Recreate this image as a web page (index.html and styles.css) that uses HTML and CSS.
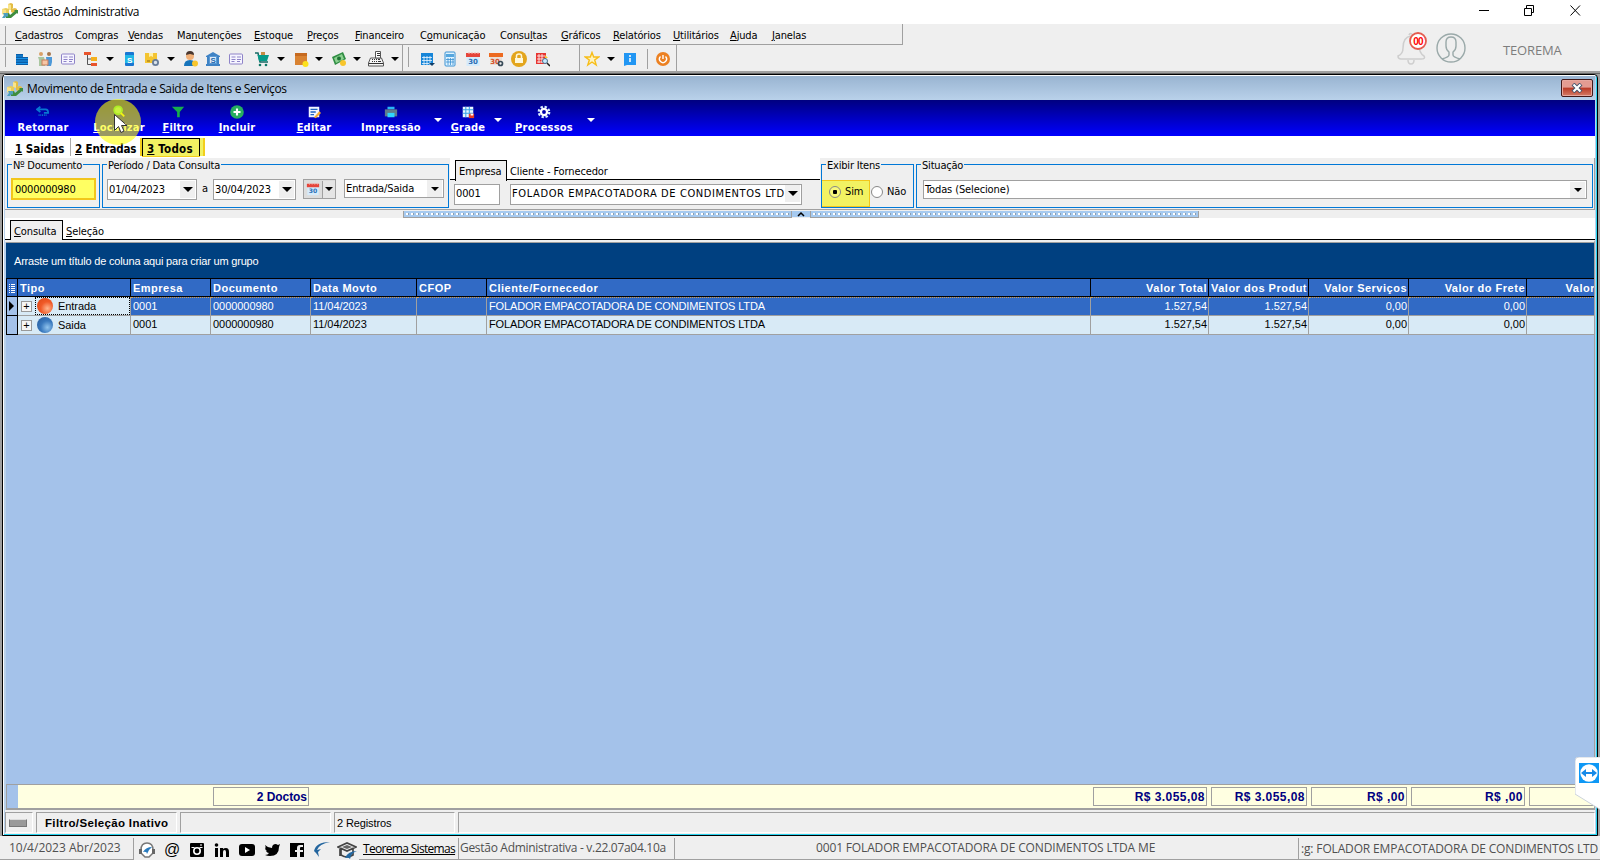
FILE: index.html
```html
<!DOCTYPE html>
<html lang="pt-BR">
<head>
    <meta charset="UTF-8">
    <title>Gestão Administrativa</title>
    <link rel="stylesheet" href="styles.css">
</head>
<body>
    <!-- Shared icons -->
    <svg class="defs" width="0" height="0">
        <symbol id="logo" viewBox="0 0 16 16"><path d="M6 1l3-1 2 1v4l-2 2-3-1z" fill="#e3bd45"/><path d="M6 1l3 1v5l-3-1z" fill="#f9e58c"/><path d="M0 6l4-1 3 1v5l-3 1-4-1z" fill="#e9cc58"/><path d="M0 6l4 1v5l-4-1z" fill="#f8e389"/><path d="M9 6l4-1 2 1v3l-4 1-2-1z" fill="#e3bd45"/><path d="M4 11l3-1 1 2 5-4-1-1h4v4l-1-1-6 5H4z" fill="#3e8d3f"/><path d="M0 15l2-3-1-2h5v4l-1-1-2 2z" fill="#4f9fbe"/></symbol>
        <symbol id="card" viewBox="0 0 16 16"><rect x="1.5" y="3" width="13" height="10" rx="1" fill="#f6f5ff" stroke="#8e83c8"/><path d="M3.5 6h4M3.5 8.5h4M3.5 10.5h3M9 6h4M9 8.5h4M9 10.5h3" stroke="#8e83c8"/></symbol>
        <symbol id="calendar" viewBox="0 0 16 16"><path d="M1.500 4h13v11h-13z" fill="#d5ebfb"/><path d="M1 2h14v4H1z" fill="#e5453a"/><path d="M4 1v2M7 1v2M10 1v2M13 1v2" stroke="#f7b6b0"/><text x="8" y="13" text-anchor="middle" class="cal-text">30</text></symbol>
        <symbol id="cash" viewBox="0 0 16 16"><path d="M1 6l11-5 3 7-11 6z" fill="#2f8d43"/><path d="M3 7l8-4 2 5-8 4z" fill="#8bd08f"/><circle cx="8" cy="7.500" r="2" fill="#1e7435"/><circle cx="12" cy="12" r="3" fill="#f7c52c"/></symbol>
    </svg>

    <!-- Application title bar -->
    <div class="app-title">
        <svg class="icon"><use href="#logo"/></svg>
        <span class="app-name">Gestão Administrativa</span>
        <svg class="window-buttons" width="102" height="12" fill="none" stroke="#000"><path d="M0 5.500h10M45.500 3.500h7v7h-7zM47.500 3v-2.500h7v7h-2.500M91.500.5l9.500 10M101 .5l-9.500 10"/></svg>
    </div>

    <!-- Menu and main toolbar -->
    <div class="app-header">
        <div class="menu">
            <span><u>C</u>adastros</span><span>Com<u>p</u>ras</span><span><u>V</u>endas</span><span>Ma<u>n</u>utenções</span><span><u>E</u>stoque</span><span><u>P</u>reços</span><span><u>F</u>inanceiro</span><span>C<u>o</u>municação</span><span>Consu<u>l</u>tas</span><span><u>G</u>ráficos</span><span><u>R</u>elatórios</span><span><u>U</u>tilitários</span><span><u>A</u>juda</span><span><u>J</u>anelas</span>
        </div>
        <div class="toolbars">
            <div class="toolbar toolbar-main">
                <svg class="icon" viewBox="0 0 16 16"><path d="M2 3h7v3h5v8H2z" fill="#0a5ea8"/><path d="M2 5h7M2 7.500h12M2 10h12M2 12.500h12" stroke="#1b9af0" stroke-width=".9"/></svg>
                <svg class="icon" viewBox="0 0 16 16"><circle cx="4" cy="3" r="2" fill="#d9a066"/><circle cx="12" cy="3" r="2" fill="#a6754b"/><path d="M1 6h6l1 4v5H2V9z" fill="#a9c6a0"/><path d="M9 6h6v5l-1 4h-4z" fill="#4c98d8"/><rect x="5" y="9" width="6" height="5" fill="#f6c6a5" stroke="#c77d5c"/></svg>
                <svg class="icon"><use href="#card"/></svg>
                <svg class="icon" viewBox="0 0 16 16"><path d="M1 1h7v3H1z" fill="#e8542c"/><path d="M8 6h6v4H8z" fill="#f4b01e"/><path d="M8 12h6v3H8z" fill="#e8542c"/><path d="M4.500 4v9.500H8M4.500 8H8" stroke="#555" fill="none"/></svg>
                <i class="arrow"></i>
                <svg class="icon" viewBox="0 0 16 16"><rect x="4" y="1" width="9" height="14" rx="1" fill="#1976d2"/><path d="M4 4h9v8H4z" fill="#20b7e7"/><text x="8.500" y="11.500" text-anchor="middle" class="dollar">S</text></svg>
                <svg class="icon" viewBox="0 0 16 16"><path d="M1 2h12v10H1z" fill="#f4c430"/><path d="M5 2h4v4l-2-1-2 1z" fill="#fff0a8"/><path d="M3 10h3" stroke="#8a6a1a"/><circle cx="11.500" cy="11.500" r="2.600" fill="#dbe3ec" stroke="#687d99" stroke-width="1.800"/></svg>
                <i class="arrow"></i>
                <svg class="icon" viewBox="0 0 16 16"><circle cx="7" cy="5" r="4" fill="#f1b078"/><path d="M3 4q0-4 4-4t4 4L7 3z" fill="#493730"/><path d="M1 15q0-6 6-6t6 6z" fill="#1674bb"/><circle cx="12" cy="12.500" r="3" fill="#f7c52c"/></svg>
                <svg class="icon" viewBox="0 0 16 16"><path d="M1 5l7-4 7 4v1H1zM1 13h14v2H1zM2 6h2v7H2zM12 6h2v7h-2z" fill="#3f83c5"/><rect x="4.500" y="5.500" width="7" height="7" fill="#ddecfa" stroke="#5a99d4"/><text x="8" y="12" text-anchor="middle" class="dollar blue">S</text></svg>
                <svg class="icon"><use href="#card"/></svg>
                <svg class="icon" viewBox="0 0 16 16"><path d="M1 2h3l2 9h8" stroke="#166a66" stroke-width="1.500" fill="none"/><path d="M3.500 4H15l-2 6H5z" fill="#079b89"/><path d="M7 1h4v3H7z" fill="#c58d45"/><circle cx="6" cy="14" r="1.300" fill="#176"/><circle cx="12" cy="14" r="1.300" fill="#176"/></svg>
                <i class="arrow"></i>
                <svg class="icon" viewBox="0 0 16 16"><path d="M2 2h12v12H2z" fill="#d98332"/><path d="M2 2h12v3H2z" fill="#c66a20"/><circle cx="12.500" cy="13" r="3" fill="#fce11d"/></svg>
                <i class="arrow"></i>
                <svg class="icon"><use href="#cash"/></svg>
                <i class="arrow"></i>
                <svg class="icon" viewBox="0 0 16 16"><path d="M2.500 7h11l2 5v3H.5v-3z" fill="#f5f5f5" stroke="#555"/><path d="M7.500 7V.5h5V7z" fill="#fff" stroke="#555"/><path d="M1 12.500h14" stroke="#333"/><path d="M9 2.500h3M9 4.500h3M4 8.500h1M6 8.500h1M8 8.500h1M10 8.500h2M4 10.500h1M6 10.500h1M8 10.500h1M10 10.500h3" stroke="#333"/></svg>
                <i class="arrow"></i>
            </div>
            <div class="toolbar toolbar-tools">
                <svg class="icon" viewBox="0 0 16 16"><path d="M2 2h12v12H2z" fill="#1685d8"/><path d="M3 6.500h10M3 9.500h10M3 12.500h8M5 5v9M8 5v9M11 5v9" stroke="#eaf5ff" stroke-width=".8"/><path d="M10 12h6l-3 3z" fill="#123e66"/></svg>
                <svg class="icon" viewBox="0 0 16 16"><rect x="3" y="1" width="10" height="14" rx="1" fill="#dff3ff" stroke="#3a91d2"/><path d="M4 3h8v3H4z" fill="#55a6de"/><path d="M4 8.500h8M4 11h8M6 7v7M8.500 7v7M11 7v7" stroke="#3a91d2" stroke-width=".8"/></svg>
                <svg class="icon"><use href="#calendar"/></svg>
                <svg class="icon" viewBox="0 0 16 16"><path d="M1 2h14v4H1z" fill="#ed6a20"/><path d="M2 6h12v8H2z" fill="#eadfd6"/><text x="7" y="13" text-anchor="middle" class="cal-text orange">30</text><circle cx="12.500" cy="12.500" r="2" fill="#efefef" stroke="#394b59" stroke-width="1.700"/></svg>
                <svg class="icon" viewBox="0 0 16 16"><circle cx="8" cy="8" r="8" fill="#e3a51c"/><path d="M4 7h8v5H4z" fill="#fff8da"/><path d="M5.500 7V5q0-2 2.500-2t2.500 2v2" fill="none" stroke="#fff8da" stroke-width="1.500"/></svg>
                <svg class="icon" viewBox="0 0 16 16"><path d="M2 2h10v11H2z" fill="#e73532"/><path d="M3 5h8M3 8h8M3 11h8M5 3v9M8 3v9" stroke="#fff" stroke-width=".8"/><path d="M11 4l3 3h-3z" fill="#f5c42f"/><circle cx="11" cy="10" r="2.500" fill="#c7e9ff" stroke="#48708c"/><path d="M13 12l3 3" stroke="#222" stroke-width="1.500"/></svg>
            </div>
            <div class="toolbar toolbar-extra">
                <svg class="icon" viewBox="0 0 16 16"><path d="M8 1.500l1.700 4.500h5l-4 3 1.500 5L8 11l-4.200 3 1.500-5-4-3h5z" fill="#fff3bd" stroke="#f7bd18" stroke-width="1.400"/></svg>
                <i class="arrow"></i>
                <svg class="icon" viewBox="0 0 16 16"><path d="M2 2h12v12H5l-3 1z" fill="#2196f3"/><path d="M8 4v2M8 7v4" stroke="#fff" stroke-width="1.500"/></svg>
                <i class="divider"></i>
                <svg class="icon" viewBox="0 0 16 16"><circle cx="8" cy="8" r="7" fill="#ec8122"/><path d="M5.500 5.500a3.500 3.500 0 1 0 5 0M8 4v4" fill="none" stroke="#fff" stroke-width="1.400"/></svg>
            </div>
        </div>
        <div class="user-area">
            <svg width="76" height="36" viewBox="0 0 76 36" fill="none"><path d="M12 3q1-3 4 0M14 4Q6 5 6 16q0 6-5 8 0 3 3 3h20q5 0 3-3-5-3-5-11M11 28q0 4 3 4t3-4" stroke="#cecece" stroke-width="1.500"/><circle cx="21" cy="9" r="8" fill="#fff" stroke="#e45b4f" stroke-width="1.800"/><text x="21" y="13" text-anchor="middle" class="badge-text">00</text><circle cx="54" cy="16" r="14" stroke="#9aa9a9" stroke-width="1.400"/><path d="M49 10q0-5 5-5t5 5v4q0 4-3 6v3q0 2 7 4M49 10v4q0 4 3 6v3q0 2-7 4" stroke="#9aa9a9" stroke-width="1.400"/></svg>
            <span class="user-name">TEOREMA</span>
        </div>
    </div>

    <!-- Child window -->
    <div class="workspace">
        <div class="child-window">
            <div class="child-title">
                <svg class="icon"><use href="#logo"/></svg>
                <span>Movimento de Entrada e Saida de Itens e Serviços</span>
                <div class="close-button"><svg width="12" height="10"><path d="M2 1l8 8M10 1L2 9" stroke="#44536b" stroke-width="4"/><path d="M2.500 1.500l7 7M9.500 1.500l-7 7" stroke="#fff" stroke-width="2.200"/></svg></div>
            </div>

            <div class="actions">
                <div class="action"><svg class="icon" viewBox="0 0 16 16"><path d="M5 2L1 5l4 3M1 5h10q3 0 3 4H9" fill="none" stroke="#0878d1" stroke-width="1.800"/><path d="M3 11.500h10" stroke="#087bd1" stroke-width="2" stroke-dasharray="1 1"/></svg><b>Retornar</b></div>
                <div class="action"><svg class="icon" viewBox="0 0 16 16"><circle cx="7" cy="6" r="4.500" fill="#7ad9a0" stroke="#35d35a" stroke-width="2"/><path d="M10 9l4 4" stroke="#e5e530" stroke-width="2"/></svg><b><u>L</u>ocalizar</b></div>
                <div class="action"><svg class="icon" viewBox="0 0 16 16"><path d="M1 2h14l-5 6v6H7V8z" fill="#18ad4b"/></svg><b><u>F</u>iltro</b></div>
                <div class="action"><svg class="icon wide" viewBox="0 0 16 16"><circle cx="8" cy="8" r="7.800" fill="#27ae60"/><path d="M8 4v8M4 8h8" stroke="#fff" stroke-width="2.400"/></svg><b><u>I</u>ncluir</b></div>
                <div class="action"><svg class="icon" viewBox="0 0 16 16"><path d="M2 2h12v12H2z" fill="#f0f5ff"/><path d="M4 5h8M4 8h6M4 11h4" stroke="#1d62c5" stroke-width="1.600"/><path d="M8 14l6-7 2 2-6 6z" fill="#f6aa2e"/></svg><b><u>E</u>ditar</b></div>
                <div class="action"><svg class="icon" viewBox="0 0 16 16"><path d="M4 2h8v3H4z" fill="#29b6f6"/><path d="M1 5h14v8H1z" fill="#607d8b"/><path d="M4 9h8v5H4z" fill="#30d5ff"/></svg><b>Imp<u>r</u>essão</b></div>
                <i class="arrow"></i>
                <div class="action"><svg class="icon" viewBox="0 0 16 16"><path d="M2 2h12v12H2z" fill="#eaf8ff"/><path d="M2 5.500h12M2 9.500h12M5.500 2v12M9.500 2v12" stroke="#3aa4e8" stroke-width="1.200"/><path d="M9 10h6v5H9z" fill="#e83d24"/><path d="M11 10h3v2h-3z" fill="#fff"/></svg><b><u>G</u>rade</b></div>
                <i class="arrow"></i>
                <div class="action"><svg class="icon" viewBox="0 0 16 16"><circle cx="8" cy="8" r="6" fill="none" stroke="#d8efff" stroke-width="2.500" stroke-dasharray="2.700 2"/><circle cx="8" cy="8" r="3.500" fill="none" stroke="#fff" stroke-width="2.600"/></svg><b><u>P</u>rocessos</b></div>
                <i class="arrow"></i>
            </div>

            <div class="type-tabs">
                <b class="type-tab"><u>1</u> Saidas</b>
                <b class="type-tab"><u>2</u> Entradas</b>
                <b class="type-tab selected"><u>3</u> Todos</b>
            </div>

            <!-- Search filters -->
            <div class="filters">
                <div class="group group-doc"><span class="legend">Nº Documento</span><div class="field marked">0000000980</div></div>
                <div class="group group-period">
                    <span class="legend">Período / Data Consulta</span>
                    <div class="field date-start">01/04/2023<i class="drop"></i></div>
                    <span class="between">a</span>
                    <div class="field date-end">30/04/2023<i class="drop"></i></div>
                    <div class="cal-button"><svg class="icon"><use href="#calendar"/></svg><i class="drop"></i></div>
                    <div class="field kind">Entrada/Saida<i class="drop"></i></div>
                </div>
                <div class="company">
                    <div class="company-tabs"><span class="small-tab">Empresa</span><span class="plain-tab">Cliente - Fornecedor</span></div>
                    <div class="company-fields"><div class="field code">0001</div><div class="field client"><span>FOLADOR EMPACOTADORA DE CONDIMENTOS LTD</span><i class="drop"></i></div></div>
                </div>
                <div class="group group-items">
                    <span class="legend">Exibir Itens</span>
                    <label class="option chosen"><i class="radio"></i>Sim</label>
                    <label class="option"><i class="radio"></i>Não</label>
                </div>
                <div class="group group-status"><span class="legend">Situação</span><div class="field">Todas (Selecione)<i class="drop"></i></div></div>
            </div>
            <div class="splitter"><i class="dots"></i><svg width="18" height="6"><path d="M6 5l3-3 3 3" fill="none" stroke="#000" stroke-width="1.500"/></svg><i class="dots"></i></div>
            <div class="view-tabs"><span class="view-tab selected"><u>C</u>onsulta</span><span class="view-tab"><u>S</u>eleção</span></div>

            <!-- Results -->
            <div class="grid">
                <div class="group-hint">Arraste um título de coluna aqui para criar um grupo</div>
                <div class="grid-row grid-head">
                    <span class="marker"><svg width="8" height="10" stroke="#fff"><path d="M0 1.500h1M2 1.500h5M0 3.500h1M2 3.500h5M0 5.500h1M2 5.500h5M0 7.500h1M2 7.500h5M0 9.500h1M2 9.500h5"/></svg></span>
                    <span>Tipo</span><span>Empresa</span><span>Documento</span><span>Data Movto</span><span>CFOP</span><span>Cliente/Fornecedor</span><span class="num">Valor Total</span><span class="num">Valor dos Produt</span><span class="num">Valor Serviços</span><span class="num">Valor do Frete</span><span class="num cut">Valor</span>
                </div>
                <div class="grid-row current">
                    <span class="marker"><svg width="6" height="10"><path d="M0 0l5 5-5 5z"/></svg></span>
                    <span class="type"><i class="expand">+</i><span class="type-name"><i class="ball in"></i>Entrada</span></span>
                    <span>0001</span><span>0000000980</span><span>11/04/2023</span><span></span><span class="client-cell">FOLADOR EMPACOTADORA DE CONDIMENTOS LTDA</span><span class="num">1.527,54</span><span class="num">1.527,54</span><span class="num">0,00</span><span class="num">0,00</span><span></span>
                </div>
                <div class="grid-row">
                    <span class="marker"></span>
                    <span class="type"><i class="expand">+</i><span class="type-name"><i class="ball out"></i>Saida</span></span>
                    <span>0001</span><span>0000000980</span><span>11/04/2023</span><span></span><span class="client-cell">FOLADOR EMPACOTADORA DE CONDIMENTOS LTDA</span><span class="num">1.527,54</span><span class="num">1.527,54</span><span class="num">0,00</span><span class="num">0,00</span><span></span>
                </div>
                <div class="grid-space"></div>
                <div class="totals"><b>2 Doctos</b><b>R$ 3.055,08</b><b>R$ 3.055,08</b><b>R$ ,00</b><b>R$ ,00</b><b></b></div>
            </div>

            <div class="child-status"><span><i class="led"></i></span><span class="filter-state">Filtro/Seleção Inativo</span><span></span><span>2 Registros</span><span></span></div>
        </div>
    </div>

    <!-- Application status bar -->
    <div class="app-status">
        <span class="today">10/4/2023 Abr/2023</span>
        <div class="social">
            <svg class="icon" viewBox="0 0 16 16"><path d="M2 8Q2 1 8 1t6 7v3l-4 4H6l-4-4z" fill="#fff" stroke="#777" stroke-width="1.500"/><path d="M0 7h3v5H0zM13 7h3v5h-3z" fill="#666"/><path d="M4 10q3-5 9-5-3 2-5 7 0-3-4-2z" fill="#287abd"/></svg>
            <svg class="icon" viewBox="0 0 16 16"><text x="8" y="13" text-anchor="middle" class="at">@</text></svg>
            <svg class="icon" viewBox="0 0 16 16"><rect x="1" y="1" width="14" height="14" rx="1"/><circle cx="8" cy="9" r="3.200" fill="none" stroke="#fff" stroke-width="1.600"/><path d="M2.500 5.500h3M10.500 5.500h3M11 3h2" stroke="#fff"/></svg>
            <svg class="icon" viewBox="0 0 16 16"><path d="M1 6h3v9H1zM6 6h3v1q1-1 3-1 3 0 3 4v5h-3v-5q0-2-1.500-2T9 10v5H6z"/><circle cx="2.500" cy="3" r="1.800"/></svg>
            <svg class="icon" viewBox="0 0 16 16"><rect x="0" y="2" width="16" height="12" rx="3"/><path d="M6 5l5 3-5 3z" fill="#fff"/></svg>
            <svg class="icon" viewBox="0 0 16 16"><path d="M1 3q3 3 7 3 0-4 4-4l2 1 2-1-1 3q0 9-9 9-3 0-5-1 3 0 4-2-2 0-3-2h1Q1 8 1 5l1 1z"/></svg>
            <svg class="icon" viewBox="0 0 16 16"><path d="M1 1h14v14h-4v-5h3V8h-3V6q0-1 1-1h2V3h-3Q8 3 8 6v2H6v2h2v5H1z"/></svg>
            <svg class="icon" viewBox="0 0 16 16"><path d="M0 9Q2 0 16 0 5 2 3 8l4-1-3 3 1 5-3-4z" fill="#23659e"/></svg>
            <svg class="icon cap" viewBox="0 0 20 18"><path d="M1 5l9-4 9 4-9 4zM4 7v6q6 4 12 0V7M3 7v7" fill="#eee" stroke="#444" stroke-width="1.700"/><path d="M5 5l5-2 5 2-5 2z" fill="#666"/><path d="M8 16q3-7 12-7-6 2-7 8-1-2-5-1z" fill="#2468a0"/></svg>
        </div>
        <span class="site"><u>Teorema Sistemas</u></span>
        <span class="version">Gestão Administrativa - v.22.07a04.10a</span>
        <span class="company-name">0001 FOLADOR EMPACOTADORA DE CONDIMENTOS LTDA ME</span>
        <span class="license">:g: FOLADOR EMPACOTADORA DE CONDIMENTOS LTD</span>
    </div>

    <!-- Remote support tab -->
    <svg class="remote" width="26" height="54"><path d="M26 0H4Q0 0 0 4v33l26 16z" fill="#fff" stroke="#ccd3dc"/><path d="M4 6h20v20H4z" fill="#0e98f5"/><circle cx="14" cy="16" r="8.700" fill="#fff"/><path d="M6 16l5-4v3h6v-3l5 4-5 4v-3h-6v3z" fill="#168ae8"/></svg>

    <!-- Mouse pointer -->
    <div class="pointer-spot"></div>
    <svg class="pointer" width="14" height="21"><path d="M.5.5v16l4-4 2.500 6 3-1.500-2.500-5.500H13z" fill="#fff" stroke="#333"/></svg>
</body>
</html>
```

FILE: styles.css
```css
* {
    box-sizing: border-box;
}
body {
    margin: 0;
    width: 1600px;
    height: 860px;
    overflow: hidden;
    display: flex;
    flex-direction: column;
    background: #efefef;
    color: #000;
    font: 11px/14px "DejaVu Sans Condensed", "DejaVu Sans", sans-serif;
    font-stretch: condensed;
    letter-spacing: -0.12px;
    white-space: nowrap;
}
u {
    text-decoration-thickness: 1px;
    text-underline-offset: 1px;
}
.defs {
    position: absolute;
}
.icon {
    display: block;
    width: 16px;
    height: 16px;
    flex: none;
}
.arrow,
.drop::after {
    display: block;
    width: 0;
    height: 0;
    border: 4px solid transparent;
    border-top-color: #000;
    border-bottom: 0;
}
.cal-text {
    font: bold 7px "DejaVu Sans", sans-serif;
    letter-spacing: 0;
    fill: #2b6fb4;
}
.cal-text.orange {
    fill: #d6502a;
}
.dollar {
    font: bold 8px "Liberation Sans", sans-serif;
    fill: #fff;
}
.dollar.blue {
    fill: #2469ac;
}

/* Application title */
.app-title {
    height: 24px;
    padding: 3px 19px 0 2px;
    display: flex;
    background: #fff;
    font: 12px/18px "Open Sans", sans-serif;
}
.app-name {
    margin-left: 5px;
    letter-spacing: -0.35px;
}
.window-buttons {
    margin: 2px 0 0 auto;
}

/* Menu and toolbars */
.app-header {
    position: relative;
    height: 47px;
    flex: none;
}
.menu {
    width: 903px;
    height: 21px;
    padding: 5px 0 0 15px;
    display: grid;
    grid-template-columns: 60px 53px 49px 77px 53px 48px 65px 80px 61px 52px 60px 57px 42px auto;
    border-right: 1px solid #a0a0a0;
    border-bottom: 1px solid #a0a0a0;
    line-height: 13px;
    letter-spacing: -0.15px;
}
.menu,
.toolbar-main,
.toolbar-tools {
    background: linear-gradient(#a0a0a0, #a0a0a0) 5px 2px / 1px 20px no-repeat;
}
.toolbars {
    display: flex;
}
.toolbar {
    height: 26px;
    padding-top: 1px;
    display: grid;
    align-items: center;
    justify-items: center;
    border-right: 1px solid #a0a0a0;
}
.toolbar-main {
    width: 403px;
    padding-left: 10px;
    grid-template-columns: 23px 23px 23px 23px 15px 23px 23px 15px 25px 20px 26px 26px 12px 28px 8px 32px 4px 34px 4px;
}
.toolbar-tools {
    width: 177px;
    padding-left: 12px;
    grid-template-columns: repeat(6, 23px);
}
.toolbar-extra {
    width: 97px;
    grid-template-columns: 24px 14px 24px 10px 22px;
}
.divider {
    width: 1px;
    height: 20px;
    background: #a0a0a0;
}
.user-area {
    position: absolute;
    left: 1397px;
    top: 8px;
    display: flex;
}
.badge-text {
    font: bold 10px "Liberation Sans", sans-serif;
    letter-spacing: -0.8px;
    fill: #f00;
}
.user-name {
    margin: 9px 0 0 30px;
    color: #7d7d7d;
    font: 13px/18px "Open Sans", sans-serif;
    letter-spacing: -0.15px;
}

/* Child window */
.workspace {
    height: 767px;
    flex: none;
    padding: 3px 2px 2px;
    background: linear-gradient(#a0a0a0 0 2px, #666 2px 3px, #a0a0a0 3px 765px, #efefef 765px);
}
.child-window {
    height: 762px;
    display: flex;
    flex-direction: column;
    padding: 0 1px;
    border: 1px solid #000;
    border-radius: 4px 4px 0 0;
    background: #b9d1ea;
    box-shadow: inset 1px 1px #fff, inset -1px -1px #28d3ef;
}
.child-title {
    height: 25px;
    flex: none;
    display: flex;
    align-items: center;
    margin-right: 1px;
    padding: 2px 2px 0 3px;
    background: linear-gradient(#99b4d1, #b9d1ea);
    border-top: 1px solid #fff;
    font: 12px/18px "Open Sans", sans-serif;
    letter-spacing: -0.38px;
}
.child-title > span {
    margin-left: 4px;
}
.close-button {
    width: 32px;
    height: 18px;
    margin: -2px 0 0 auto;
    display: flex;
    align-items: center;
    justify-content: center;
    border: 1px solid #421919;
    border-radius: 2px;
    box-shadow: inset 0 0 0 1px #e6a89f;
    background: linear-gradient(#e39c92 0 45%, #b93a26 50%, #d47b66);
}
.actions,
.type-tabs,
.filters,
.splitter,
.view-tabs {
    margin: 0 1px;
    flex: none;
}
.actions {
    height: 36px;
    display: grid;
    grid-template-columns: 76px 76px 42px 76px 78px 76px 18px 42px 18px 74px 20px;
    color: #fff;
    background: linear-gradient(#000080, #0000ff);
    letter-spacing: 0.2px;
}
.action {
    display: flex;
    flex-direction: column;
    align-items: center;
    padding-top: 5px;
    line-height: 13px;
}
.action .icon {
    width: 14px;
    height: 14px;
}
.action .icon.wide {
    width: 16px;
}
.action b {
    margin-top: 2px;
}
.actions .arrow {
    margin: 18px auto 0;
    border-top-color: #fff;
}
.type-tabs {
    height: 22px;
    display: flex;
    align-items: flex-start;
    padding: 2px 0 0 1px;
    background: #fff;
    font-size: 11.500px;
    letter-spacing: 0;
}
.type-tab {
    height: 18px;
    width: 65px;
    padding: 3px 0 0 9px;
    border-right: 1px solid #aaa;
    line-height: 16px;
}
.type-tab:nth-child(2) {
    padding-left: 4px;
    width: 66px;
    border: 0;
    letter-spacing: -0.15px;
}
.type-tab.selected {
    width: 58px;
    margin-left: 5px;
    padding: 2px 0 0 4px;
    border: 1px solid #000;
    border-bottom: 0;
    background: #f1f162;
    box-shadow: 3px 0 #f1f162, 5px 0 #f2ce1b, -2px 0 #f2ce1b, 0 1px #f2ce1b;
    letter-spacing: 0.25px;
}

/* Filters */
.filters {
    height: 52px;
    display: flex;
    background: #efefef;
    border-bottom: 1px solid #a0a0a0;
    border-right: 1px solid #a0a0a0;
    padding-left: 2px;
}
.group {
    position: relative;
    height: 44px;
    margin-top: 6px;
    display: flex;
    align-items: flex-start;
    border: 1px solid #0078d7;
}
.legend {
    position: absolute;
    top: -7px;
    left: 4px;
    padding: 1px 1px 0;
    background: #efefef;
    line-height: 14px;
    letter-spacing: -0.2px;
}
.field {
    position: relative;
    height: 21px;
    display: flex;
    align-items: center;
    justify-content: space-between;
    overflow: hidden;
    padding: 0 1px;
    border: 1px solid #a0a0a0;
    background: #fff;
}
.drop {
    width: 15px;
    height: 17px;
    flex: none;
    display: flex;
    align-items: center;
    justify-content: center;
    background: #efefef;
}
.drop::after {
    content: "";
    border-width: 5px 5px 0;
}
.group-doc {
    width: 93px;
    padding: 13px 3px 0;
}
.group-doc .legend {
    letter-spacing: -0.3px;
}
.marked {
    width: 86px;
    height: 22px;
    padding: 1px 0 0 2px;
    border: 2px solid #f2c61b;
    background: #ffff62;
    letter-spacing: -0.25px;
}
.group-period {
    width: 347px;
    margin-left: 2px;
    padding: 14px 4px 0;
}
.date-start {
    width: 90px;
}
.between {
    width: 16px;
    text-align: center;
    line-height: 19px;
}
.date-end {
    width: 83px;
}
.cal-button {
    width: 33px;
    height: 20px;
    margin: 0 8px 0 7px;
    display: flex;
    align-items: center;
    border: 1px solid #a0a0a0;
    background: #ddd;
}
.cal-button .icon {
    width: 14px;
    height: 14px;
    margin: 0 2px;
}
.cal-button .drop {
    width: 13px;
    background: #e5e5e5;
    border-left: 1px solid #a0a0a0;
}
.cal-button .drop::after,
.kind .drop::after,
.group-status .drop::after {
    border-width: 4px 4px 0;
}
.kind {
    width: 100px;
    height: 19px;
}
.company {
    width: 370px;
    margin-left: 1px;
}
.company-tabs {
    height: 22px;
    display: flex;
    padding: 2px 0 0 5px;
    border-bottom: 1px solid #000;
    background: #fff;
}
.small-tab {
    width: 52px;
    height: 21px;
    padding: 4px 0 0 3px;
    border: 1px solid #000;
    border-bottom: 0;
    background: #efefef;
}
.plain-tab {
    padding: 5px 3px 0;
}
.company-fields {
    display: flex;
    gap: 10px;
    padding: 4px 0 0 4px;
}
.company-fields .field {
    padding-bottom: 2px;
}
.code {
    width: 46px;
}
.client {
    width: 292px;
    letter-spacing: 0.6px;
}
.group-items {
    width: 93px;
    margin-left: 1px;
}
.option {
    width: 42px;
    height: 27px;
    margin-top: 15px;
    padding-bottom: 4px;
    display: flex;
    align-items: center;
}
.option.chosen {
    width: 48px;
    padding-left: 6px;
    background: #f2f262;
    border: 1px solid #f2c61b;
    border-left: 0;
}
.radio {
    width: 12px;
    height: 12px;
    margin: 0 4px 0 1px;
    border: 1px solid #888;
    border-radius: 50%;
    background: #fff;
}
.chosen .radio {
    background: radial-gradient(#000 0 2px, #f8f87c 2.500px);
}
.group-status {
    width: 677px;
    margin-left: 2px;
    padding: 15px 5px 0 6px;
}
.group-status .field {
    width: 664px;
    height: 19px;
    padding-top: 1px;
}
.splitter {
    height: 8px;
    display: flex;
    padding: 1px 0 0 398px;
    background: #efefef;
}
.splitter svg {
    background: #a6caf0;
}
.dots {
    width: 389px;
    height: 7px;
    background: repeating-linear-gradient(90deg, transparent 0 2px, #fff 2px 4px, #8f9ead 4px 5px) 0 2px / 100% 2px no-repeat, #a6caf0;
    border: 1px solid #a0a0a0;
    border-top: 0;
}
.view-tabs {
    height: 22px;
    display: flex;
    padding: 2px 0 0 5px;
    background: #fff;
    border-bottom: 1px solid #000;
}
.view-tab {
    height: 20px;
    padding: 5px 3px 0;
}
.view-tab.selected {
    width: 53px;
    padding: 4px 0 0 3px;
    background: #efefef;
    border: 1px solid #000;
    border-bottom: 0;
}

/* Data grid */
.grid {
    flex: 1;
    display: flex;
    flex-direction: column;
    margin: 0 1px;
    padding-left: 1px;
    border-top: 2px solid #efefef;
    border-right: 1px solid #a0a0a0;
    background: #b9d1ea;
    font: 11px/17px "Liberation Sans", sans-serif;
    letter-spacing: -0.05px;
}
.group-hint {
    height: 37px;
    padding: 10px 8px;
    border-top: 1px solid #a0a0a0;
    border-bottom: 1px solid #000;
    color: #fff;
    background: #004080;
    letter-spacing: -0.19px;
}
.grid-row {
    height: 19px;
    display: grid;
    grid-template-columns: 11px 113px 80px 100px 106px 70px 604px 118px 100px 100px 118px 68px;
    border-left: 1px solid #000;
    background: #d8eaf6;
    overflow: hidden;
}
.grid-row > span {
    padding: 0 2px;
    border-right: 1px solid #a0a0a0;
    border-bottom: 1px solid #a0a0a0;
    overflow: hidden;
}
.grid-row > .marker {
    display: flex;
    align-items: center;
    border-color: #000;
    background: #a4c2ea;
}
.grid-head {
    height: 18px;
    color: #fff;
    background: #316ac5;
    font-weight: bold;
    letter-spacing: 0.5px;
    line-height: 19px;
}
.grid-row.grid-head > span {
    border-color: #000;
    background: #316ac5;
}
.grid-row > .num {
    padding-right: 1px;
    text-align: right;
}
.grid-row > .cut {
    padding-right: 0;
    border-right: 0;
}
.current > span:not(.marker):not(.type) {
    color: #fff;
    background: #316ac5;
    border-top: 1px dotted #d8a04c;
    line-height: 16px;
}
.grid-row .client-cell {
    letter-spacing: -0.14px;
}
.grid-row > .type {
    display: flex;
    align-items: center;
    padding-right: 0;
}
.expand {
    width: 11px;
    height: 11px;
    margin: 0 3px 0 1px;
    border: 1px solid #999;
    background: #f5f5f5;
    font-style: normal;
    line-height: 9px;
    text-align: center;
}
.type-name {
    height: 18px;
    flex: 1;
    display: flex;
    align-items: center;
    padding-left: 2px;
}
.current .type-name {
    border: 1px dotted #000;
    padding-left: 1px;
}
.ball {
    width: 16px;
    height: 16px;
    margin-right: 5px;
    border-radius: 50%;
}
.ball.in {
    background: radial-gradient(circle at 65% 65%, #ffb58e, #f05a28 45%, #d84312);
}
.ball.out {
    background: radial-gradient(circle at 65% 65%, #91c4ee, #3978bd 45%, #245799);
}
.grid-space {
    flex: 1;
    background: #a4c2ea;
}
.totals {
    height: 26px;
    padding: 2px 0 0 206px;
    display: grid;
    grid-template-columns: 96px 894px 96px 96px 114px 66px;
    column-gap: 4px;
    border: 1px solid #a0a0a0;
    border-width: 1px 0 2px 1px;
    background: linear-gradient(90deg, #a4c2ea 11px, #ffffe1 11px);
    color: #000080;
    font-size: 12px;
    line-height: 19px;
    overflow: hidden;
}
.totals b {
    height: 19px;
    padding-right: 1px;
    border: 1px solid #a0a0a0;
    text-align: right;
}
.totals b:nth-child(n + 2) {
    letter-spacing: 0.45px;
}
.totals b:nth-child(2) {
    margin-left: 780px;
}

/* Status bars */
.child-status {
    height: 24px;
    flex: none;
    margin: 0 1px 1px;
    padding-top: 2px;
    display: grid;
    grid-template-columns: 28px 141px 151px 121px 1fr;
    column-gap: 3px;
    background: #efefef;
    font: 11px/20px "Liberation Sans", sans-serif;
}
.child-status > span {
    height: 21px;
    padding-left: 2px;
    border: 1px solid #a0a0a0;
    border-right-color: #fff;
    border-bottom-color: #fff;
}
.child-status .filter-state {
    padding-left: 8px;
    font-weight: bold;
    font-size: 11.500px;
    letter-spacing: 0.35px;
}
.led {
    display: block;
    width: 18px;
    height: 8px;
    margin: 6px 0 0 1px;
    background: #999;
    border: 1px solid #777;
    border-top-color: #ddd;
}
.app-status {
    height: 22px;
    display: flex;
    color: #505050;
    font: 12px/20px "Open Sans", sans-serif;
    letter-spacing: -0.15px;
}
.app-status > span {
    height: 22px;
    border: 1px solid #a0a0a0;
    border-width: 0 1px 1px 0;
}
.today {
    width: 134px;
    padding-left: 9px;
    letter-spacing: 0;
}
.social {
    width: 225px;
    padding: 4px 0 0 5px;
    display: flex;
    gap: 9px;
}
.cap {
    width: 20px;
    height: 18px;
    margin-left: -2px;
}
.at {
    font: 16px "Liberation Sans", sans-serif;
}
.site {
    width: 100px;
    padding: 1px 0 0 4px;
    color: #000;
    letter-spacing: -0.68px;
}
.version {
    width: 216px;
    padding-left: 1px;
    letter-spacing: -0.3px;
}
.company-name {
    width: 624px;
    padding-left: 141px;
}
.license {
    width: 301px;
    padding: 1px 0 0 2px;
    border-right: 0 !important;
    overflow: hidden;
}
.remote {
    position: absolute;
    left: 1575px;
    top: 757px;
}
.pointer-spot {
    position: absolute;
    left: 95px;
    top: 99px;
    width: 46px;
    height: 46px;
    border-radius: 50%;
    background: rgba(255, 255, 0, 0.6);
}
.pointer {
    position: absolute;
    left: 114px;
    top: 114px;
}
```
